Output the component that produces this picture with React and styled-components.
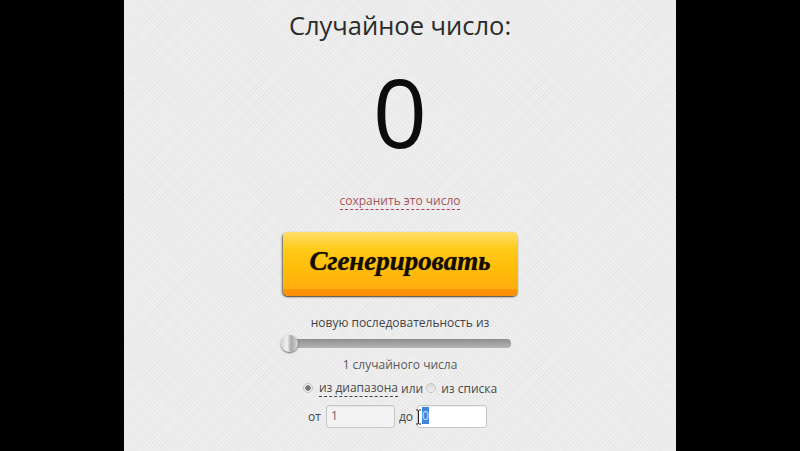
import React from 'react'
import styled, { createGlobalStyle } from 'styled-components'

const GlobalStyle = createGlobalStyle`
    html, body {
        margin: 0;
        padding: 0;
        height: 100%;
        overflow: hidden;
        background-color: #000;
    }
`

const Page = styled.div`
    width: 552px;
    height: 451px;
    margin: 0 auto;
    padding-top: 8px;
    box-sizing: border-box;
    display: flex;
    flex-direction: column;
    align-items: center;
    overflow: hidden;
    font-family: "Open Sans", sans-serif;
    color: #4a4a4a;
    background-color: #ececec;
    background-image:
        repeating-linear-gradient(45deg, rgba(255, 255, 255, 0.22) 0 1px, transparent 1px 3px),
        repeating-linear-gradient(-45deg, rgba(0, 0, 0, 0.018) 0 1px, transparent 1px 3px);
`

const Title = styled.h1`
    margin: 0;
    font-size: 25.5px;
    line-height: 34px;
    font-weight: 400;
    color: #2b2b2b;
`

const Result = styled.div`
    margin-top: 20px;
    font-size: 95px;
    line-height: 98px;
    color: #0c0c0c;
`

const SaveLink = styled.a`
    margin-top: 32px;
    font-size: 12px;
    line-height: 17px;
    color: #a5575d;
    border-bottom: 1px dashed #b0405a;
`

const GenerateButton = styled.button`
    margin-top: 22px;
    width: 235px;
    height: 64px;
    padding: 0 0 5px;
    border: 0;
    border-radius: 5px;
    background: linear-gradient(#ffdf6a 0%, #ffcb1a 26%, #ffbd08 58%, #ffae10 89%, #ff9405 90%, #f98f0a 100%);
    box-shadow: -1px 1px 2px rgba(60, 50, 30, 0.7), 0 1px 1px rgba(60, 50, 30, 0.5);
    font-family: "Liberation Serif", serif;
    font-size: 27px;
    font-weight: 700;
    font-style: italic;
    color: #120c04;
    text-shadow: 0 0 1px rgba(18, 12, 4, 0.7);
`

const Caption = styled.div`
    font-size: 12px;
    line-height: 17px;
    color: ${({ $light }) => ($light ? '#5a5a5a' : '#444')};
    margin-top: ${({ $top }) => $top}px;
`

const SliderTrack = styled.div`
    position: relative;
    margin: 8px 6px 0 0;
    width: 228px;
    height: 9px;
    border-radius: 4px;
    background: linear-gradient(#8e8e8e, #b5b5b5);
`

const SliderHandle = styled.span`
    position: absolute;
    left: -2px;
    top: -4px;
    width: 17px;
    height: 17px;
    border-radius: 50%;
    background: linear-gradient(90deg, #cfcfcf 0%, #f2f2f2 35%, #a9a9a9 60%, #d8d8d8 100%);
    box-shadow: 0 1px 2px rgba(0, 0, 0, 0.6);
`

const SourceRow = styled.div`
    display: flex;
    align-items: center;
    margin-top: 6px;
    font-size: 12px;
    line-height: 17px;
    color: #4a4a4a;
`

const Radio = styled.span`
    width: 10px;
    height: 10px;
    box-sizing: border-box;
    border-radius: 50%;
    margin: ${({ $margin }) => $margin};
    border: 1px solid #c4c4c4;
    background: ${({ $checked }) =>
        $checked
            ? 'radial-gradient(circle, #777 0 2.5px, #eee 3px)'
            : 'linear-gradient(#d8d8d8, #f2f2f2)'};
`

const DottedWord = styled.span`
    border-bottom: 1px dashed #444;
    margin-right: 3px;
`

const RangeRow = styled.div`
    display: flex;
    align-items: center;
    margin-top: 8px;
    margin-left: -5px;
    font-size: 12px;
    color: #444;
`

const Field = styled.div`
    position: relative;
    box-sizing: border-box;
    width: ${({ $width }) => $width}px;
    height: 23px;
    margin: ${({ $margin }) => $margin};
    padding-left: 4px;
    border: 1px solid #c6c6c6;
    border-radius: 3px;
    background: ${({ $focused }) => ($focused ? '#fff' : '#f3f3f3')};
    box-shadow: inset 0 1px 1px rgba(0, 0, 0, 0.06);
    line-height: 20px;
    color: #666;
`

const Selected = styled.span`
    background: #3f86e0;
    color: #cfe0f6;
`

const Cursor = styled.svg`
    position: absolute;
    left: -3px;
    top: 3px;
`

const App = () => (
    <>
        <GlobalStyle />
        <Page>
            <Title>Случайное число:</Title>
            <Result>0</Result>
            <SaveLink>сохранить это число</SaveLink>
            <GenerateButton>Сгенерировать</GenerateButton>
            <Caption $top={18}>новую последовательность из</Caption>
            <SliderTrack>
                <SliderHandle />
            </SliderTrack>
            <Caption $top={8} $light>1 случайного числа</Caption>
            <SourceRow>
                <Radio $checked $margin="0 6px 0 0" />
                <DottedWord>из диапазона</DottedWord>
                или
                <Radio $margin="0 5px 0 3px" />
                из списка
            </SourceRow>
            <RangeRow>
                от
                <Field $width={69} $margin="0 4px 0 5px">1</Field>
                до
                <Field $width={70} $margin="0 0 0 4px" $focused>
                    <Selected>0</Selected>
                    <Cursor width="7" height="16" viewBox="0 0 7 16">
                        <path d="M1 1h2l.5.5L4 1h2M3.5 1.5v13M1 15h2l.5-.5.5.5h2" fill="none" stroke="#222" strokeWidth="1" />
                    </Cursor>
                </Field>
            </RangeRow>
        </Page>
    </>
)

export default App
